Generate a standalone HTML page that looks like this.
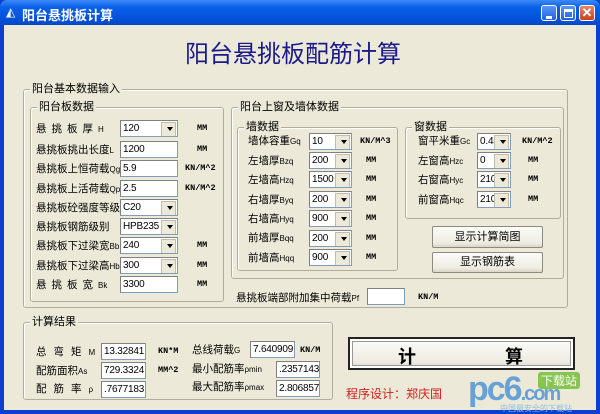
<!DOCTYPE html>
<html><head><meta charset="utf-8"><style>
*{margin:0;padding:0;box-sizing:border-box}
body{width:600px;height:414px;overflow:hidden;background:#0a3fd0;font-family:"Liberation Sans","Noto Sans CJK SC","WenQuanYi Zen Hei",sans-serif;font-size:10.5px;color:#000;position:relative}
.a{position:absolute;white-space:nowrap}
#title{left:0;top:0;width:600px;height:25px;background:linear-gradient(#3d8af7,#0a5fe8 30%,#0553dc 70%,#0448c8);border-radius:7px 7px 0 0}
#client{left:4px;top:25px;width:592px;height:385px;background:#ece9d8}
.tb{width:16px;height:16px;top:5px;border:1px solid #fff;border-radius:3px;background:linear-gradient(#5b95f8,#2060e0)}
.g{position:absolute;border:1px solid #b0ad9c;border-radius:3px;box-shadow:inset 1px 1px 0 #fff}
.gl{position:absolute;top:-8px;left:6px;background:#ece9d8;padding:0 2px;font-size:11px;line-height:14px}
.in{position:absolute;height:17px;background:#fff;border:1px solid #7f9db9;border-top-color:#808080;border-left-color:#808080;font-family:"Liberation Sans",sans-serif;font-size:10px;letter-spacing:-0.2px;line-height:15px;padding-left:2px;overflow:hidden}
.cb::after{content:"";position:absolute;right:1px;top:1px;width:13px;height:13px;background:#ece9d8;border:1px solid #c0bdaa}
.cb::before{content:"";position:absolute;right:4px;top:6px;border:3.5px solid transparent;border-top:4px solid #000;z-index:2}
.u{position:absolute;font-family:"Liberation Mono",monospace;font-size:8.5px;font-weight:bold}
.s{font-size:8px}
.btn{position:absolute;background:linear-gradient(#fbfbf8,#eeece2 80%,#d8d5c6);border:1px solid #8d8b80;border-radius:2px;text-align:center;font-size:11px}
</style></head><body>
<div id="title" class="a"></div>
<div class="a" style="left:6px;top:5px;color:#fff;font-size:12px">◭</div>
<div class="a" style="left:22px;top:5px;color:#fff;font-weight:bold;font-size:13px">阳台悬挑板计算</div>
<div class="a tb" style="left:541px"><div style="position:absolute;left:4px;top:10px;width:6px;height:3px;background:#fff"></div></div>
<div class="a tb" style="left:560px"><div style="position:absolute;left:3px;top:3px;width:9px;height:9px;border:1px solid #fff;border-top-width:3px"></div></div>
<div class="a tb" style="left:579px;background:linear-gradient(#e8866a,#c8421c);color:#fff;font-weight:bold;text-align:center;line-height:14px;font-size:13px">✕</div>
<div id="client" class="a"></div>

<div class="a" style="left:185px;top:34px;font-size:24px;color:#1a1a8c">阳台悬挑板配筋计算</div>

<div class="g" style="left:23px;top:89px;width:545px;height:219px"><div class="gl">阳台基本数据输入</div></div>
<div class="g" style="left:30px;top:107px;width:194px;height:195px"><div class="gl">阳台板数据</div></div>
<div class="g" style="left:231px;top:107px;width:333px;height:172px"><div class="gl">阳台上窗及墙体数据</div></div>
<div class="g" style="left:237px;top:127px;width:161px;height:144px"><div class="gl">墙数据</div></div>
<div class="g" style="left:405px;top:127px;width:156px;height:92px"><div class="gl">窗数据</div></div>
<div class="g" style="left:23px;top:322px;width:310px;height:78px"><div class="gl">计算结果</div></div>

<div class="a" style="left:36px;top:121px;letter-spacing:5px">悬挑板厚<span class="s" style="letter-spacing:0">H</span></div>
<div class="in cb" style="left:120px;top:120px;width:58px">120</div><div class="u" style="left:197px;top:123px">MM</div>
<div class="a" style="left:36px;top:142px">悬挑板挑出长度<span class="s">L</span></div>
<div class="in" style="left:120px;top:141px;width:58px">1200</div><div class="u" style="left:197px;top:144px">MM</div>
<div class="a" style="left:36px;top:161px">悬挑板上恒荷载<span class="s">Qg</span></div>
<div class="in" style="left:120px;top:160px;width:58px">5.9</div><div class="u" style="left:185px;top:163px">KN/M^2</div>
<div class="a" style="left:36px;top:181px">悬挑板上活荷载<span class="s">Qp</span></div>
<div class="in" style="left:120px;top:180px;width:58px">2.5</div><div class="u" style="left:185px;top:183px">KN/M^2</div>
<div class="a" style="left:36px;top:200px">悬挑板砼强度等级</div>
<div class="in cb" style="left:120px;top:199px;width:58px">C20</div>
<div class="a" style="left:36px;top:219px">悬挑板钢筋级别</div>
<div class="in cb" style="left:120px;top:218px;width:58px">HPB235</div>
<div class="a" style="left:36px;top:238px">悬挑板下过梁宽<span class="s">Bb</span></div>
<div class="in cb" style="left:120px;top:237px;width:58px">240</div><div class="u" style="left:197px;top:240px">MM</div>
<div class="a" style="left:36px;top:258px">悬挑板下过梁高<span class="s">Hb</span></div>
<div class="in cb" style="left:120px;top:257px;width:58px">300</div><div class="u" style="left:197px;top:260px">MM</div>
<div class="a" style="left:36px;top:277px;letter-spacing:5px">悬挑板宽<span class="s" style="letter-spacing:0">Bk</span></div>
<div class="in" style="left:120px;top:276px;width:58px">3300</div><div class="u" style="left:197px;top:279px">MM</div>

<div class="a" style="left:248px;top:133px">墙体容重<span class="s">Gq</span></div>
<div class="in cb" style="left:309px;top:133px;width:43px">10</div><div class="u" style="left:360px;top:136px">KN/M^3</div>
<div class="a" style="left:248px;top:153px">左墙厚<span class="s">Bzq</span></div>
<div class="in cb" style="left:309px;top:152px;width:43px">200</div><div class="u" style="left:366px;top:155px">MM</div>
<div class="a" style="left:248px;top:172px">左墙高<span class="s">Hzq</span></div>
<div class="in cb" style="left:309px;top:171px;width:43px">1500</div><div class="u" style="left:366px;top:174px">MM</div>
<div class="a" style="left:248px;top:192px">右墙厚<span class="s">Byq</span></div>
<div class="in cb" style="left:309px;top:191px;width:43px">200</div><div class="u" style="left:366px;top:194px">MM</div>
<div class="a" style="left:248px;top:211px">右墙高<span class="s">Hyq</span></div>
<div class="in cb" style="left:309px;top:210px;width:43px">900</div><div class="u" style="left:366px;top:213px">MM</div>
<div class="a" style="left:248px;top:230px">前墙厚<span class="s">Bqq</span></div>
<div class="in cb" style="left:309px;top:230px;width:43px">200</div><div class="u" style="left:366px;top:233px">MM</div>
<div class="a" style="left:248px;top:250px">前墙高<span class="s">Hqq</span></div>
<div class="in cb" style="left:309px;top:249px;width:43px">900</div><div class="u" style="left:366px;top:252px">MM</div>

<div class="a" style="left:418px;top:133px">窗平米重<span class="s">Gc</span></div>
<div class="in cb" style="left:477px;top:133px;width:34px">0.45</div><div class="u" style="left:522px;top:136px">KN/M^2</div>
<div class="a" style="left:418px;top:153px">左窗高<span class="s">Hzc</span></div>
<div class="in cb" style="left:477px;top:152px;width:34px">0</div><div class="u" style="left:528px;top:155px">MM</div>
<div class="a" style="left:418px;top:172px">右窗高<span class="s">Hyc</span></div>
<div class="in cb" style="left:477px;top:171px;width:34px">2100</div><div class="u" style="left:528px;top:174px">MM</div>
<div class="a" style="left:418px;top:192px">前窗高<span class="s">Hqc</span></div>
<div class="in cb" style="left:477px;top:191px;width:34px">2100</div><div class="u" style="left:528px;top:194px">MM</div>

<div class="btn" style="left:432px;top:226px;width:111px;height:22px;line-height:20px">显示计算简图</div>
<div class="btn" style="left:432px;top:252px;width:111px;height:21px;line-height:19px">显示钢筋表</div>

<div class="a" style="left:236px;top:290px">悬挑板端部附加集中荷载<span class="s">Pf</span></div>
<div class="in" style="left:367px;top:288px;width:38px"></div><div class="u" style="left:418px;top:292px">KN/M</div>

<div class="a" style="left:36px;top:344px;letter-spacing:7px">总弯矩<span class="s" style="letter-spacing:0">M</span></div>
<div class="in" style="left:101px;top:343px;width:45px">13.32841</div><div class="u" style="left:158px;top:346px">KN*M</div>
<div class="a" style="left:192px;top:342px">总线荷载<span class="s">G</span></div>
<div class="in" style="left:250px;top:341px;width:45px">7.640909</div><div class="u" style="left:300px;top:345px">KN/M</div>
<div class="a" style="left:36px;top:363px">配筋面积<span class="s">As</span></div>
<div class="in" style="left:101px;top:362px;width:45px">729.3324</div><div class="u" style="left:158px;top:365px">MM^2</div>
<div class="a" style="left:192px;top:361px">最小配筋率<span class="s">ρmin</span></div>
<div class="in" style="left:276px;top:361px;width:44px">.2357143</div>
<div class="a" style="left:36px;top:381px;letter-spacing:7px">配筋率<span class="s" style="letter-spacing:0">ρ</span></div>
<div class="in" style="left:101px;top:381px;width:45px">.7677183</div>
<div class="a" style="left:192px;top:379px">最大配筋率<span class="s">ρmax</span></div>
<div class="in" style="left:276px;top:380px;width:44px">2.806857</div>

<div class="btn" style="left:348px;top:337px;width:227px;height:33px;border:2px solid #222;border-radius:0;box-shadow:inset 0 0 0 2px #fff,inset 0 0 0 3px #999"></div>
<div class="a" style="left:398px;top:343px;font-size:18px;font-weight:bold">计</div>
<div class="a" style="left:505px;top:343px;font-size:18px;font-weight:bold">算</div>

<div class="a" style="left:346px;top:385px;color:#d02020;font-size:12px">程序设计：郑庆国</div>
<div class="a" style="left:468px;top:370px;color:#3a8ad8;font-size:34px;font-weight:bold;letter-spacing:-2px;opacity:.75">pc6<span style="font-size:20px">.com</span></div>
<div class="a" style="left:538px;top:372px;background:#7cc242;color:#fff;font-size:12px;padding:0 3px;border-radius:3px;opacity:.9">下载站</div>
<div class="a" style="left:500px;top:403px;color:#8fbbe5;font-size:8px">中国最安全的下载站</div>
</body></html>
